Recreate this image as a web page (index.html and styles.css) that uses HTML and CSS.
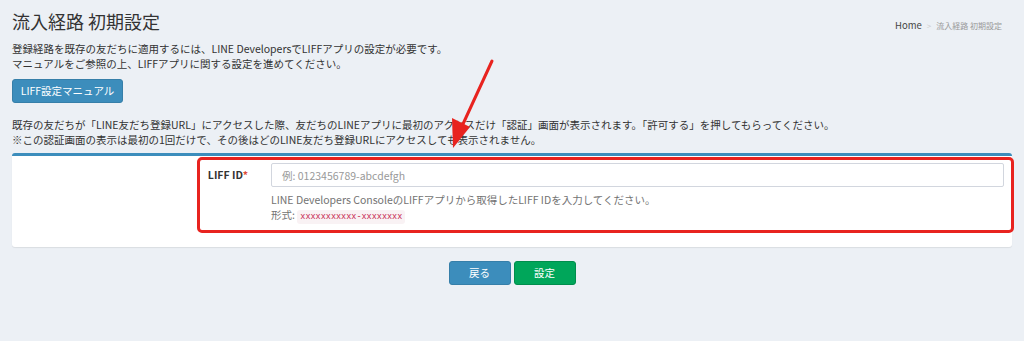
FILE: index.html
```html
<!DOCTYPE html>
<html lang="ja">
<head>
<meta charset="utf-8">
<title>流入経路 初期設定</title>
<link rel="stylesheet" href="styles.css">
</head>
<body>
<div class="page">
  <header class="content-header">
    <h1 class="title">流入経路 初期設定</h1>
    <ol class="breadcrumb">
      <li class="crumb-home">Home</li>
      <li class="crumb-sep">&gt;</li>
      <li class="crumb-active">流入経路 初期設定</li>
    </ol>
  </header>
  <section class="content">
    <p class="lead">登録経路を既存の友だちに適用するには、LINE DevelopersでLIFFアプリの設定が必要です。<br>マニュアルをご参照の上、LIFFアプリに関する設定を進めてください。</p>
    <button class="btn btn-primary btn-manual">LIFF設定マニュアル</button>
    <p class="note">既存の友だちが「LINE友だち登録URL」にアクセスした際、友だちのLINEアプリに最初のアクセスだけ「認証」画面が表示されます。「許可する」を押してもらってください。<br>※この認証画面の表示は最初の1回だけで、その後はどのLINE友だち登録URLにアクセスしても表示されません。</p>
    <div class="box">
      <div class="form-row">
        <label class="form-label">LIFF ID<span class="req">*</span></label>
        <div class="form-field">
          <input class="form-input" type="text" placeholder="例: 0123456789-abcdefgh">
          <p class="help">LINE Developers ConsoleのLIFFアプリから取得したLIFF IDを入力してください。<br>形式: <code class="code">xxxxxxxxxxx-xxxxxxxx</code></p>
        </div>
      </div>
      <div class="highlight"></div>
    </div>
    <div class="actions">
      <button class="btn btn-primary btn-action">戻る</button>
      <button class="btn btn-success btn-action">設定</button>
    </div>
  </section>
  <svg class="arrow" width="60" height="100" viewBox="0 0 60 100">
    <line x1="51" y1="9" x2="22" y2="72" stroke="#e8231f" stroke-width="3" stroke-linecap="round"/>
    <polygon points="12,96 11,66 29,75" fill="#e8231f"/>
  </svg>
</div>
</body>
</html>
```
FILE: styles.css
```css
* { box-sizing: border-box; }
html, body {
  margin: 0;
  padding: 0;
  background: #ecf0f5;
  font-family: "Noto Sans CJK JP", "Noto Sans", sans-serif;
  color: #333;
}
.page {
  position: relative;
  width: 1024px;
  height: 341px;
  overflow: hidden;
}
.content-header {
  display: flex;
  justify-content: space-between;
  align-items: flex-start;
  padding: 9px 22px 0 12px;
}
.title {
  margin: 0;
  font-size: 18px;
  font-weight: 400;
  line-height: 24px;
  color: #333;
}
.breadcrumb {
  list-style: none;
  display: flex;
  align-items: baseline;
  gap: 5px;
  margin: 9px 0 0;
  padding: 0;
  font-size: 9.5px;
  line-height: 14px;
}
.crumb-home { color: #444; }
.crumb-sep { color: #ccc; font-size: 8px; }
.crumb-active { color: #999; font-size: 8px; }
.content {
  padding: 8px 12px 0 12px;
}
.lead, .note {
  margin: 0;
  font-size: 10.5px;
  line-height: 15px;
  color: #333;
}
.btn {
  border: 1px solid transparent;
  border-radius: 3px;
  color: #fff;
  font-family: inherit;
  font-size: 10.5px;
  line-height: 14px;
  padding: 4px 9px;
  cursor: pointer;
}
.btn-primary { background: #3c8dbc; border-color: #367fa9; }
.btn-success { background: #00a65a; border-color: #008d4c; }
.btn-manual {
  display: block;
  margin: 8px 0 14px;
  height: 24px;
  width: 111px;
  padding: 0;
}
.box {
  position: relative;
  margin-top: 6px;
  background: #fff;
  border-top: 3px solid #3c8dbc;
  border-radius: 3px;
  height: 94px;
  box-shadow: 0 1px 1px rgba(0,0,0,0.08);
}
.form-row {
  display: flex;
  padding: 7px 8px 0 0;
}
.form-label {
  width: 236px;
  text-align: right;
  font-size: 10.5px;
  font-weight: 700;
  line-height: 14px;
  padding-top: 5px;
  color: #333;
}
.req { color: #dd4b39; }
.form-field {
  flex: 1;
  margin-left: 23px;
}
.form-input {
  display: block;
  width: 100%;
  height: 24px;
  border: 1px solid #d2d6de;
  border-radius: 2px;
  padding: 0 10px;
  font-family: inherit;
  font-size: 10.5px;
  color: #555;
}
.form-input::placeholder { color: #999; }
.help {
  margin: 5px 0 0;
  font-size: 10.5px;
  line-height: 15px;
  color: #737373;
}
.code {
  font-family: "Liberation Mono", monospace;
  font-size: 8.5px;
  color: #c7254e;
  background: #f9f2f4;
  padding: 2px 3px;
  border-radius: 3px;
}
.highlight {
  position: absolute;
  left: 185px;
  top: 1px;
  width: 817px;
  height: 76px;
  border: 3px solid #e8231f;
  border-radius: 5px;
  pointer-events: none;
}
.actions {
  display: flex;
  justify-content: center;
  gap: 3px;
  margin-top: 14px;
}
.btn-action {
  width: 62px;
  height: 24px;
  padding: 0;
}
.arrow {
  position: absolute;
  left: 441px;
  top: 52px;
}
```
